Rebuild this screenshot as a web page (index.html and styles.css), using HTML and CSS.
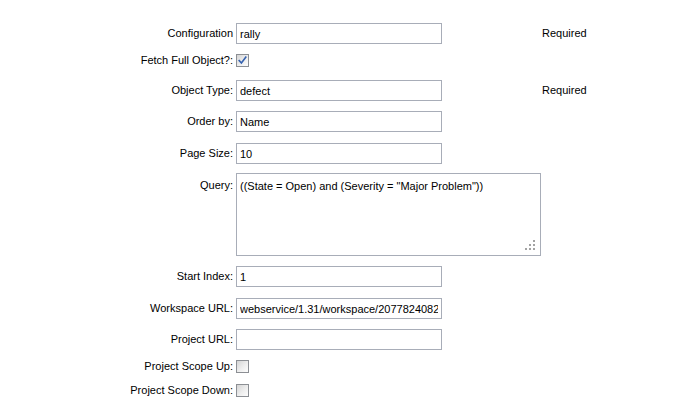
FILE: index.html
```html
<!DOCTYPE html>
<html>
<head>
<meta charset="utf-8">
<link rel="stylesheet" href="styles.css">
</head>
<body>
<form class="form">
  <label class="lbl">Configuration</label>
  <div class="field"><input class="txt" type="text" value="rally"></div>
  <div class="req">Required</div>

  <label class="lbl lbl-cb">Fetch Full Object?:</label>
  <div class="field field-cb"><span class="cb"><svg width="11" height="11" viewBox="0 0 11 11"><path d="M2.2 5.6 L4.4 8.1 L8.8 2.2" fill="none" stroke="#3562b0" stroke-width="1.6" stroke-linecap="square"/></svg></span></div>
  <div></div>

  <label class="lbl">Object Type:</label>
  <div class="field"><input class="txt" type="text" value="defect"></div>
  <div class="req">Required</div>

  <label class="lbl">Order by:</label>
  <div class="field"><input class="txt" type="text" value="Name"></div>
  <div></div>

  <label class="lbl">Page Size:</label>
  <div class="field"><input class="txt" type="text" value="10"></div>
  <div></div>

  <label class="lbl lbl-top">Query:</label>
  <div class="field"><div class="ta-wrap"><textarea class="ta">((State = Open) and (Severity = "Major Problem"))</textarea><svg class="grip" width="11" height="11" viewBox="0 0 11 11"><g fill="#a3a3a3"><rect x="8" y="0" width="2" height="2"/><rect x="4" y="4" width="2" height="2"/><rect x="8" y="4" width="2" height="2"/><rect x="0" y="8" width="2" height="2"/><rect x="4" y="8" width="2" height="2"/><rect x="8" y="8" width="2" height="2"/></g></svg></div></div>
  <div></div>

  <label class="lbl">Start Index:</label>
  <div class="field"><input class="txt" type="text" value="1"></div>
  <div></div>

  <label class="lbl">Workspace URL:</label>
  <div class="field"><input class="txt" type="text" value="webservice/1.31/workspace/2077824082"></div>
  <div></div>

  <label class="lbl">Project URL:</label>
  <div class="field"><input class="txt" type="text" value=""></div>
  <div></div>

  <label class="lbl lbl-cb">Project Scope Up:</label>
  <div class="field field-cb"><span class="cb"></span></div>
  <div></div>

  <label class="lbl lbl-cb">Project Scope Down:</label>
  <div class="field field-cb"><span class="cb"></span></div>
  <div></div>
</form>
</body>
</html>
```
FILE: styles.css
```css
html, body {
  margin: 0;
  padding: 0;
  background: #ffffff;
}
body {
  font-family: "Liberation Sans", Arial, sans-serif;
  font-size: 11px;
  color: #000000;
}
.form {
  display: grid;
  grid-template-columns: 236px 306px auto;
  grid-template-rows: 31px 26px 31px 32px 30px 93px 32px 31px 31px 24px 13px;
  padding-top: 23px;
  align-items: start;
}
.lbl {
  text-align: right;
  padding-right: 3px;
  white-space: nowrap;
  line-height: 21px;
}
.lbl-cb {
  line-height: 13px;
}
.lbl-top {
  line-height: 13px;
  padding-top: 6px;
}
.field {
  display: flex;
  align-items: flex-start;
}
.txt {
  box-sizing: border-box;
  width: 206px;
  height: 21px;
  margin: 0;
  border: 1px solid #a8adb8;
  padding: 0 3px;
  font-family: "Liberation Sans", Arial, sans-serif;
  font-size: 11px;
  color: #000000;
  background: #ffffff;
  outline: none;
}
.ta-wrap {
  position: relative;
  width: 305px;
  height: 83px;
}
.ta {
  box-sizing: border-box;
  width: 305px;
  height: 83px;
  margin: 0;
  border: 1px solid #a8adb8;
  padding: 6px 3px;
  font-family: "Liberation Sans", Arial, sans-serif;
  font-size: 11px;
  line-height: 13px;
  color: #000000;
  resize: none;
  outline: none;
  display: block;
}
.grip {
  position: absolute;
  right: 5px;
  bottom: 5px;
}
.cb {
  box-sizing: border-box;
  display: inline-flex;
  align-items: center;
  justify-content: center;
  width: 13px;
  height: 13px;
  border: 1px solid #8c8f94;
  background: linear-gradient(135deg, #d4d4d4 0%, #eeeeee 55%, #fdfdfd 100%);
}
.req {
  white-space: nowrap;
  line-height: 21px;
}
```
